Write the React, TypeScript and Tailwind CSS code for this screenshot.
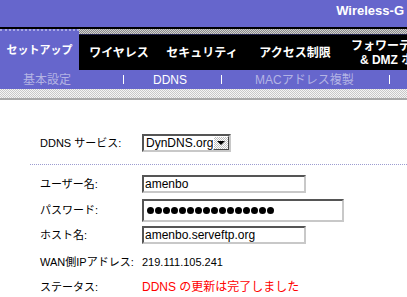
const FONT = "font-['Liberation_Sans','Noto_Sans_CJK_JP',sans-serif]";

function Sep() {
  return <div className="w-[1px] h-[9px] bg-white" />;
}

function Box({ w, h, children }: { w: string; h: string; children?: React.ReactNode }) {
  return (
    <div
      className={`${w} ${h} flex items-center bg-white border-2 border-t-[#555] border-l-[#555] border-r-[#c8c8c8] border-b-[#c8c8c8] pl-[1px] text-[12px] text-black`}
    >
      {children}
    </div>
  );
}

function Row({ label, children, className = "" }: { label: string; children: React.ReactNode; className?: string }) {
  return (
    <div className={`flex items-center ${className}`}>
      <div className="w-[102px] text-[11px] text-black whitespace-nowrap">{label}</div>
      {children}
    </div>
  );
}

export default function App() {
  return (
    <div className={`w-[407px] h-[297px] overflow-hidden bg-white ${FONT}`}>
      {/* top band */}
      <div className="h-[27px] bg-[#6666cc] flex justify-end pr-[3px] pt-[3px]">
        <span className="text-[13px] font-bold text-white leading-[15px] font-['Liberation_Sans',sans-serif]">
          Wireless-G
        </span>
      </div>
      <div className="h-[2px] bg-black" />

      {/* main tabs */}
      <div className="flex h-[41px]">
        <div className="w-[79px] shrink-0 bg-[#6666cc] border-t-2 border-dotted border-[#a8a8e8] flex items-center justify-center text-white text-[11px] font-bold whitespace-nowrap">
          セットアップ
        </div>
        <div className="flex-1 min-w-0 flex flex-col">
          <div className="h-[5px] bg-[repeating-conic-gradient(#8a8a8a_0_25%,#d0d0d0_0_50%)] bg-[length:2px_2px]" />
          <div className="h-[1px] bg-[#22224a]" />
          <div className="flex-1 bg-black flex items-center text-white text-[12px] font-bold whitespace-nowrap overflow-hidden">
            <div className="w-[80px] shrink-0 text-center">ワイヤレス</div>
            <div className="w-[86px] shrink-0 text-center">セキュリティ</div>
            <div className="w-[100px] shrink-0 text-center">アクセス制限</div>
            <div className="pl-[6px] shrink-0 flex flex-col items-center leading-[14px]">
              <span>フォワーディング</span>
              <span>&amp; DMZ ホスト</span>
            </div>
          </div>
        </div>
      </div>

      {/* sub tabs */}
      <div className="h-[19px] bg-[#6666cc] flex items-center text-[12px] whitespace-nowrap">
        <div className="w-[123px] pl-[23px] text-[#b4b4e4]">基本設定</div>
        <Sep />
        <div className="w-[97px] pl-[29px] text-white">DDNS</div>
        <Sep />
        <div className="w-[167px] pl-[33px] text-[#b4b4e4]">MACアドレス複製</div>
        <Sep />
      </div>
      <div className="h-[9px] bg-[repeating-conic-gradient(#c8c8c8_0_25%,#f4f4f4_0_50%)] bg-[length:2px_2px]" />
      <div className="h-[2px] bg-[#a8a8a8]" />

      {/* form */}
      <div className="pt-[34px] pl-[30px]">
        <div className="pl-[10px]">
          <Row label="DDNS サービス:">
            <div className="w-[89px] h-[18px] flex items-center bg-white border-2 border-t-[#555] border-l-[#555] border-r-[#c8c8c8] border-b-[#c8c8c8] text-[12px] text-black">
              <span className="flex-1 pl-[2px]">DynDNS.org</span>
              <div className="w-[16px] h-[14px] bg-[repeating-conic-gradient(#bdbdbd_0_25%,#ffffff_0_50%)] bg-[length:2px_2px] border border-t-white border-l-white border-r-[#444] border-b-[#444] flex items-center justify-center">
                <div className="w-0 h-0 border-l-[4px] border-r-[4px] border-t-[4px] border-l-transparent border-r-transparent border-t-black" />
              </div>
            </div>
          </Row>
        </div>

        <div className="mt-[12px] h-[1px] border-t border-dotted border-[#9c9cd0]" />

        <div className="pl-[10px]">
          <Row label="ユーザー名:" className="mt-[10px]">
            <Box w="w-[164px]" h="h-[18px]">amenbo</Box>
          </Row>
          <Row label="パスワード:" className="mt-[6px]">
            <Box w="w-[202px]" h="h-[23px]">
              <div className="flex gap-[1px] pl-[2px]">
                {Array.from({ length: 16 }).map((_, i) => (
                  <div key={i} className="w-[7px] h-[7px] rounded-full bg-black" />
                ))}
              </div>
            </Box>
          </Row>
          <Row label="ホスト名:" className="mt-[4px]">
            <Box w="w-[164px]" h="h-[18px]">amenbo.serveftp.org</Box>
          </Row>
          <Row label="WAN側IPアドレス:" className="mt-[9px] h-[18px]">
            <span className="text-[11px] text-black">219.111.105.241</span>
          </Row>
          <Row label="ステータス:" className="mt-[7px] h-[18px]">
            <span className="text-[12px] text-[#ff0000] whitespace-nowrap">DDNS の更新は完了しました</span>
          </Row>
        </div>
      </div>
    </div>
  );
}
